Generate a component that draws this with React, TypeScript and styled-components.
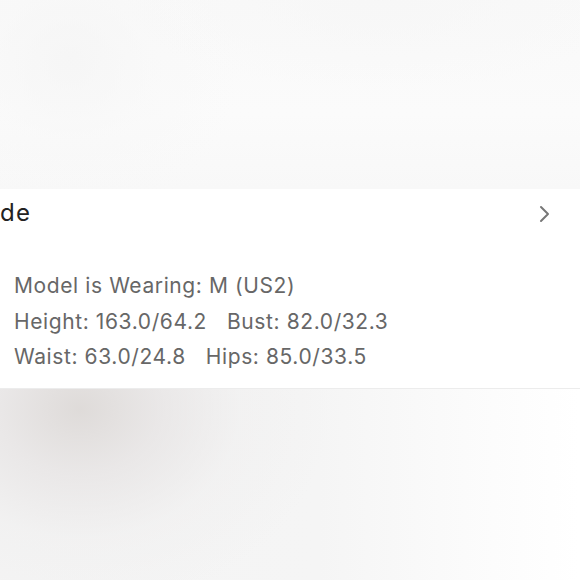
import React from "react";
import styled, { createGlobalStyle } from "styled-components";

const Global = createGlobalStyle`
  html, body { margin: 0; padding: 0; background: #ffffff; }
  #root { width: 580px; height: 580px; overflow: hidden; }
`;

const Page = styled.div`
  width: 580px;
  height: 580px;
  display: flex;
  flex-direction: column;
  font-family: Inter, "Liberation Sans", Arial, sans-serif;
  overflow: hidden;
`;

const TopArea = styled.div`
  height: 189px;
  flex: none;
  background:
    radial-gradient(circle at 70px 60px, rgba(244,244,244,0.7) 0, rgba(247,247,247,0.4) 80px, rgba(250,250,250,0) 170px),
    radial-gradient(ellipse 260px 90px at 380px 0px, rgba(246,246,246,0.7), rgba(250,250,250,0) 100%),
    linear-gradient(180deg, #f9f9f9 0%, #fbfbfb 60%, #f8f8f8 100%);
`;

const Card = styled.section`
  height: 199px;
  flex: none;
  background: #ffffff;
  border-bottom: 1px solid #ececec;
  display: flex;
  flex-direction: column;
`;

const TitleRow = styled.div`
  display: flex;
  align-items: center;
  justify-content: space-between;
  height: 50px;
  padding: 0 29px 0 0;
`;

const Title = styled.div`
  font-size: 24px;
  color: #222222;
  letter-spacing: 1.2px;
  margin-top: -4px;
`;

const Details = styled.div`
  padding: 29px 14px 0;
  display: flex;
  flex-direction: column;
`;

const Line = styled.div<{ $gap: number }>`
  font-size: 21px;
  line-height: 35.5px;
  color: #676767;
  letter-spacing: 0.6px;
  white-space: nowrap;
  display: flex;
  gap: ${(p) => p.$gap}px;
`;

const BottomArea = styled.div`
  flex: 1;
  background:
    radial-gradient(ellipse 260px 210px at 80px 20px, rgba(220,216,214,0.9) 0, rgba(229,226,226,0.7) 80px, rgba(238,237,237,0.4) 160px, rgba(245,245,245,0) 250px),
    linear-gradient(90deg, #f4f4f4 0%, #f5f5f5 55%, #fbfbfb 80%, #ffffff 100%);
`;

const Chevron = () => (
  <svg width="14" height="20" viewBox="0 0 14 20" fill="none">
    <path d="M4 3 L11 10 L4 17" stroke="#777777" strokeWidth="2" strokeLinecap="round" strokeLinejoin="round" />
  </svg>
);

export default function App() {
  return (
    <>
      <Global />
      <Page>
        <TopArea />
        <Card>
          <TitleRow>
            <Title>de</Title>
            <Chevron />
          </TitleRow>
          <Details>
            <Line $gap={0}>
              <span>Model is Wearing: M (US2)</span>
            </Line>
            <Line $gap={20}>
              <span>Height: 163.0/64.2</span>
              <span>Bust: 82.0/32.3</span>
            </Line>
            <Line $gap={20}>
              <span>Waist: 63.0/24.8</span>
              <span>Hips: 85.0/33.5</span>
            </Line>
          </Details>
        </Card>
        <BottomArea />
      </Page>
    </>
  );
}
